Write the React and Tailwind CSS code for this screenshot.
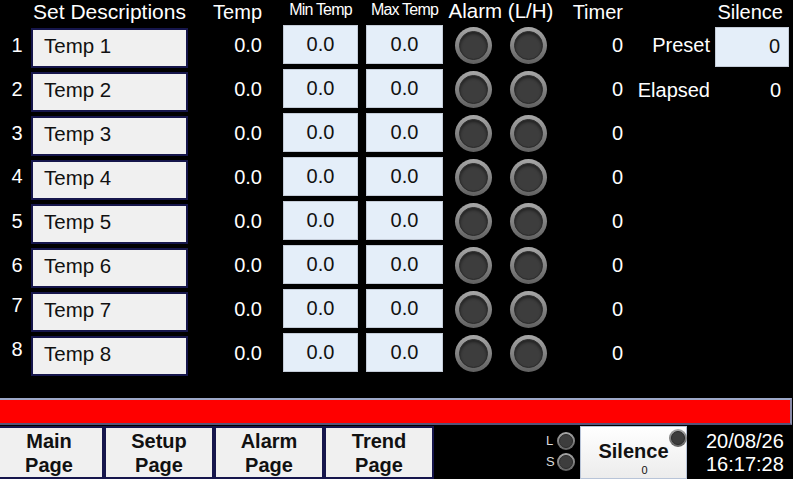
import React from "react";

const rows = [
  { n: 1, lift: 0 },
  { n: 2, lift: 0 },
  { n: 3, lift: 0 },
  { n: 4, lift: 1 },
  { n: 5, lift: 0 },
  { n: 6, lift: 0 },
  { n: 7, lift: 4 },
  { n: 8, lift: 4 },
];

// Round panel lamp: grey bezel ring around a dark lens
function Lamp({ big }) {
  if (big) {
    return (
      <div className="w-[37px] h-[37px] rounded-full bg-linear-to-b from-[#a8a8a8] to-[#606060] p-[4px]">
        <div className="w-full h-full rounded-full bg-[#3d3d3d] border border-[#2b2b2b] shadow-[inset_0_2px_3px_rgba(0,0,0,0.45)]" />
      </div>
    );
  }
  return (
    <div className="w-[18px] h-[18px] rounded-full bg-linear-to-b from-[#a8a8a8] to-[#606060] p-[2px]">
      <div className="w-full h-full rounded-full bg-[#3d3d3d] border border-[#2b2b2b]" />
    </div>
  );
}

function Row({ n, lift }) {
  return (
    <div className="flex h-[44px] items-start">
      <div className="w-[31px] h-[42px] flex items-center justify-center pl-[3px] pb-[2px] text-[20px] text-white">
        <span style={{ marginTop: -2 * lift }}>{n}</span>
      </div>
      <div className="mt-[3px] w-[157px] h-[40px] border-2 border-[#16164c] bg-[#f0f0f0] flex items-center pl-[11px] pb-[3px] text-[20.5px] text-[#111]">
        Temp {n}
      </div>
      <div className="w-[74px] h-[42px] flex items-center justify-end pb-[2px] text-[20px] text-white">0.0</div>
      <div className="ml-[21px] w-[75px] h-[39px] border border-[#c4ccd8] bg-[#e4eef9] flex items-center justify-center pb-[2px] text-[20px] text-[#111]">
        0.0
      </div>
      <div className="ml-[8px] w-[77px] h-[39px] border border-[#c4ccd8] bg-[#e4eef9] flex items-center justify-center pb-[2px] text-[20px] text-[#111]">
        0.0
      </div>
      <div className="ml-[12px] mt-[2px]">
        <Lamp big />
      </div>
      <div className="ml-[18px] mt-[2px]">
        <Lamp big />
      </div>
      <div className="w-[76px] h-[42px] flex items-center justify-end pb-[2px] text-[20px] text-white">0</div>
    </div>
  );
}

function NavButton({ first, top, bottom }) {
  return (
    <div
      className={
        "w-[110px] h-[53px] border-2 border-[#16164c] bg-[#f0f0f0] flex flex-col items-center pt-[1px] text-[20px] leading-[24px] font-bold text-[#111] " +
        (first ? "-ml-[6px]" : "")
      }
    >
      <span>{top}</span>
      <span>{bottom}</span>
    </div>
  );
}

export default function App() {
  return (
    <div className="w-[793px] h-[479px] bg-black overflow-hidden flex flex-col font-['Liberation_Sans',Arial,sans-serif]">
      {/* table and silence timer panel */}
      <div className="flex h-[377px]">
        <div className="flex flex-col">
          <div className="flex h-[25px] items-center pb-[2px] text-[20px] text-white whitespace-nowrap">
            <div className="w-[31px]" />
            <div className="w-[157px] flex justify-center text-[21px]">
              <span>Set Descriptions</span>
            </div>
            <div className="w-[74px] text-right">Temp</div>
            <div className="ml-[21px] w-[75px] flex justify-center text-[16px] tracking-[-0.8px] -mt-[3px]">
              <span>Min Temp</span>
            </div>
            <div className="ml-[8px] w-[77px] flex justify-center text-[16px] tracking-[-0.8px] -mt-[3px]">
              <span>Max Temp</span>
            </div>
            <div className="ml-[12px] w-[92px] flex justify-center text-[20.5px]">
              <span>Alarm (L/H)</span>
            </div>
            <div className="w-[76px] text-right">Timer</div>
          </div>
          {rows.map((r) => (
            <Row key={r.n} n={r.n} lift={r.lift} />
          ))}
        </div>

        <div className="w-[170px] flex flex-col text-[20px] text-white">
          <div className="h-[25px] flex items-center justify-end pr-[10px] pb-[2px]">Silence</div>
          <div className="flex h-[44px] items-start">
            <div className="w-[87px] h-[42px] flex items-center justify-end pb-[2px]">Preset</div>
            <div className="ml-[5px] mt-[2px] w-[74px] h-[40px] border border-[#c4ccd8] bg-[#e4eef9] flex items-center justify-end pr-[8px] pb-[2px] text-[#111]">
              0
            </div>
          </div>
          <div className="flex h-[44px] items-center pb-[2px]">
            <div className="w-[87px] text-right">Elapsed</div>
            <div className="w-[71px] text-right">0</div>
          </div>
        </div>
      </div>

      {/* alarm banner */}
      <div className="mt-[21px] w-[792px] h-[29px] bg-[#ff0000] border-t-2 border-r-2 border-b-2 border-t-[#9ca8c8] border-r-[#8a8aa8] border-b-[#55557a]" />

      {/* navigation and status bar */}
      <div className="mt-[1px] flex items-start">
        <NavButton first top="Main" bottom="Page" />
        <NavButton top="Setup" bottom="Page" />
        <NavButton top="Alarm" bottom="Page" />
        <NavButton top="Trend" bottom="Page" />

        <div className="ml-[112px] mt-[4px] flex flex-col">
          <div className="h-[21px] flex items-center">
            <span className="w-[9px] text-[13px] text-[#dddddd]">L</span>
            <div className="ml-[2px]">
              <Lamp />
            </div>
          </div>
          <div className="h-[21px] flex items-center">
            <span className="w-[9px] text-[13px] text-[#dddddd]">S</span>
            <div className="ml-[2px]">
              <Lamp />
            </div>
          </div>
        </div>

        <div className="relative ml-[5px] w-[107px] h-[53px] border border-[#b8c4d8] bg-linear-to-b from-[#ffffff] to-[#ececec] flex flex-col items-center pt-[12px]">
          <span className="text-[20px] leading-[24px] font-bold text-[#111]">Silence</span>
          <span className="mt-[1px] pl-[22px] text-[11px] leading-[12px] text-[#111]">0</span>
          <div className="absolute -right-[1px] top-[2px]">
            <Lamp />
          </div>
        </div>

        <div className="ml-[19px] mt-[4px] flex flex-col text-[20px] leading-[23px] text-white">
          <span>20/08/26</span>
          <span>16:17:28</span>
        </div>
      </div>
    </div>
  );
}
